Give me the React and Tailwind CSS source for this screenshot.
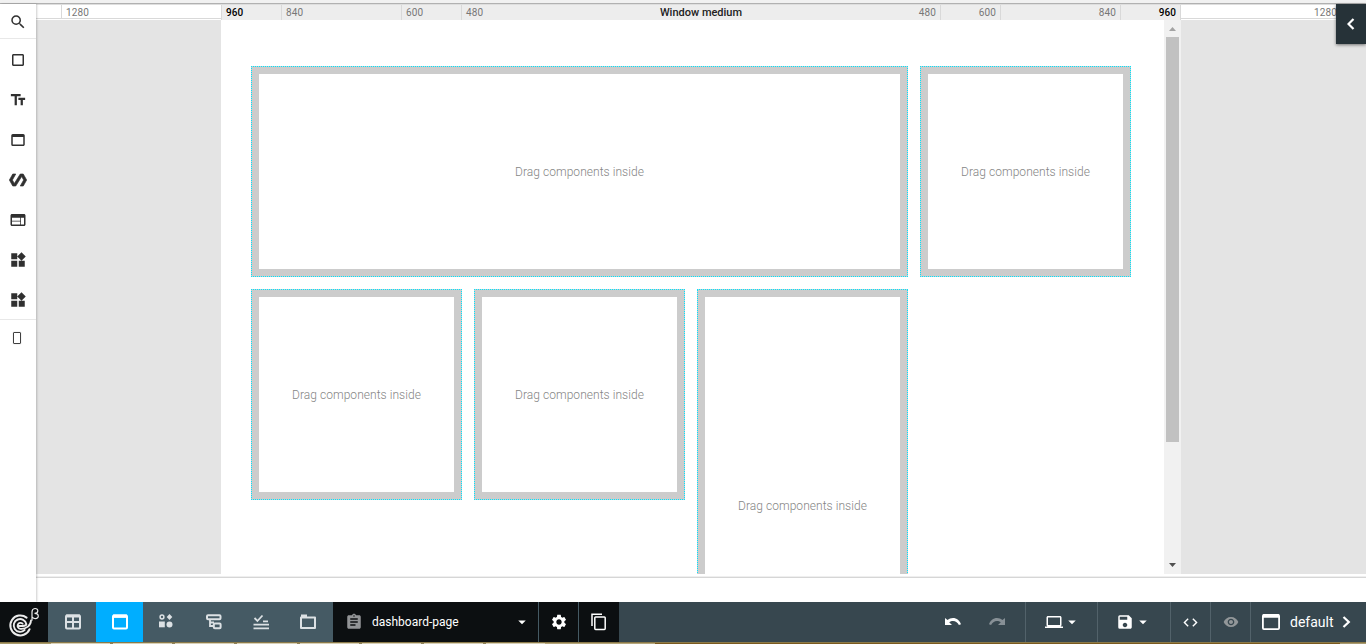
import { MdSearch, MdCropSquare, MdTextFields, MdWebAsset, MdWeb, MdWidgets, MdAssignment, MdSettings, MdLaptop, MdSave, MdCode, MdVisibility, MdArrowDropDown } from "react-icons/md";

function Polymer({ size }) {
  return (
    <svg width={size} height={size} viewBox="0 0 24 24" fill="currentColor" stroke="currentColor" strokeWidth="0.9">
      <path d="M19 4h-4L7.11 16.63 4.5 12 9 4H5L.5 12 5 20h4l7.89-12.63L19.5 12 15 20h4l4.5-8z" />
    </svg>
  );
}

const tools = [MdCropSquare, MdTextFields, MdWebAsset, Polymer, MdWeb, MdWidgets, MdWidgets];

function Panel({ className = "" }) {
  return (
    <div className={`relative border-8 border-[#ccc] ${className}`}>
      <div className="pointer-events-none absolute -inset-2 border border-dotted border-[#00e5ff]" />
      <div className="flex h-full items-center justify-center text-[12px] font-light leading-none tracking-[0.05px] text-[#858585]">Drag components inside</div>
    </div>
  );
}

function Tick({ value, className = "" }) {
  return <div className={`shrink-0 border-[#d9d9d9] leading-[16px] ${className}`}>{value}</div>;
}

function Ruler() {
  return (
    <div className="flex h-4 w-full shrink-0 overflow-hidden border-t border-[#dedede] text-[10px] tracking-[0.1px] text-[#777]">
      <div className="h-[14px] w-[25px] shrink-0 border-b border-[#d9d9d9] bg-white" />
      <Tick value="1280" className="h-[14px] w-40 border-b border-l bg-white pl-1" />
      <div className="flex w-[960px] shrink-0 bg-[#ededed]">
        <Tick value="960" className="w-[60px] border-l pl-1 font-medium text-black" />
        <Tick value="840" className="w-[120px] border-l pl-1" />
        <Tick value="600" className="w-[60px] border-l pl-1" />
        <Tick value="480" className="w-[60px] border-l pl-1" />
        <div className="flex-1 text-center text-[11px] font-medium leading-[16px] tracking-normal text-[#222]">Window medium</div>
        <Tick value="480" className="w-[60px] border-r pr-1 text-right" />
        <Tick value="600" className="w-[60px] border-r pr-1 text-right" />
        <Tick value="840" className="w-[120px] border-r pr-1 text-right" />
        <Tick value="960" className="w-[60px] border-r pr-1 text-right font-medium text-black" />
      </div>
      <Tick value="1280" className="h-[14px] w-40 border-b border-r bg-white pr-[3px] text-right" />
      <div className="h-[14px] flex-1 border-b border-[#d9d9d9] bg-white" />
    </div>
  );
}

function Logo() {
  return (
    <svg width="48" height="40" viewBox="0 0 48 40" fill="none" stroke="#ececec" strokeLinecap="round">
      <path d="M26.6 15.6A10 10 0 1 0 29.6 27.2" strokeWidth="2" />
      <path d="M24.6 28A6.4 6.4 0 1 1 26.4 22.2C26 24.2 23.5 24 18 24" strokeWidth="1.9" />
      <path d="M22.6 21.6A3 3 0 1 0 20.6 26.8C26.5 27.2 30.8 23.5 31 18.4" strokeWidth="1.8" />
      <path d="M32 18.2V10C32 5.5 37.8 5.6 37.8 8.8C37.8 10.8 36 11.4 34.5 11.4C39.6 11.4 39.2 16.6 35.4 16.6C34 16.6 33 16 32.3 15.2" strokeWidth="1.2" />
    </svg>
  );
}

function Glyph({ children }) {
  return <svg width="18" height="18" viewBox="0 0 18 18" fill="none" stroke="#dce1e4" strokeWidth="2">{children}</svg>;
}

function ModeButton({ children, className = "" }) {
  return <button className={`flex h-10 shrink-0 items-center justify-center ${className}`}>{children}</button>;
}

function Toolbar() {
  return (
    <footer className="flex h-10 shrink-0 bg-[#37474f] text-white">
      <div className="w-12 shrink-0 bg-[#0c0f11]"><Logo /></div>
      <div className="flex w-[285px] shrink-0 bg-[#455a64]">
        <ModeButton className="w-12 pl-[2px]">
          <Glyph><rect x="2" y="2.5" width="14" height="13" rx="1" /><path d="M2 9H16M9 3V16" /><path d="M2 3H16" strokeWidth="3" /></Glyph>
        </ModeButton>
        <ModeButton className="w-[47px] bg-[#00aeff]">
          <Glyph><rect x="2" y="2.5" width="14" height="13" rx="1" stroke="#fff" /><path d="M2 3.2H16" stroke="#fff" strokeWidth="3.4" /></Glyph>
        </ModeButton>
        <ModeButton className="w-[46px]">
          <Glyph><g transform="translate(0 -1)"><circle cx="5" cy="5" r="1.9" strokeWidth="1.5" /><path d="M12.5 2L15.3 5L12.5 8L9.7 5Z" fill="#dce1e4" stroke="none" /><rect x="2" y="9.5" width="5.8" height="5.8" fill="#dce1e4" stroke="none" /><circle cx="12.5" cy="12.4" r="3" fill="#dce1e4" stroke="none" /></g></Glyph>
        </ModeButton>
        <ModeButton className="w-[50px]">
          <Glyph><rect x="2" y="2.3" width="13.5" height="4" rx="1" /><path d="M5 6.5V13H8.5M5 9.5H9" strokeWidth="1.8" /><rect x="8.8" y="10.5" width="6.8" height="4.7" rx="1" /></Glyph>
        </ModeButton>
        <ModeButton className="w-[44px]">
          <Glyph><path d="M2.5 5L5.4 8L10.5 2.5M11 8.3H16M1.5 11.7H17M1.5 15.3H17" strokeWidth="1.8" /></Glyph>
        </ModeButton>
        <ModeButton className="w-[50px]">
          <Glyph><path d="M2 4.5H16V15H2Z" strokeLinejoin="round" /><path d="M2 3H8" strokeWidth="3" /></Glyph>
        </ModeButton>
      </div>
      <div className="flex w-[206px] shrink-0 items-center border-r border-[#455a64] bg-[#0c0f11] pl-[12px] pr-[7px]">
        <MdAssignment size={18} className="text-[#929496]" />
        <span className="ml-[9px] flex-1 text-[12px] leading-none">dashboard-page</span>
        <MdArrowDropDown size={18} />
      </div>
      <div className="flex w-10 shrink-0 items-center justify-center border-r border-[#455a64] bg-[#0c0f11]"><MdSettings size={18} /></div>
      <div className="flex w-10 shrink-0 items-center justify-center bg-[#0c0f11]">
        <svg width="18" height="18" viewBox="0 0 18 18" fill="none" stroke="#fff" strokeWidth="1.5"><path d="M2 13V1.2H12" /><rect x="4.8" y="4" width="10.4" height="12.4" rx="0.8" /></svg>
      </div>
      <div className="flex flex-1 items-center justify-end gap-[28px] pr-[20px]">
        <svg width="16" height="8" viewBox="0 0 16 8" fill="white"><path d="M8 0C5.9 0 4 .8 2.5 2L0 0V7H7L4.2 4.2C5.3 3.4 6.6 2.9 8 2.9C10.6 2.9 13 4.8 13.9 7L16 6.3C14.9 2.6 11.6 0 8 0Z" /></svg>
        <svg width="16" height="8" viewBox="0 0 16 8" fill="#879096"><path d="M8 0C10.1 0 12 .8 13.5 2L16 0V7H9L11.8 4.2C10.7 3.4 9.4 2.9 8 2.9C5.4 2.9 3 4.8 2.1 7L0 6.3C1.1 2.6 4.4 0 8 0Z" /></svg>
      </div>
      <div className="flex w-[72px] shrink-0 items-center border-l border-[#52626a] pl-[19px]"><MdLaptop size={18} /><MdArrowDropDown size={18} /></div>
      <div className="flex w-[73px] shrink-0 items-center border-l border-[#52626a] pl-[18px]"><MdSave size={18} /><MdArrowDropDown size={18} /></div>
      <div className="flex w-10 shrink-0 items-center justify-center border-l border-[#52626a]"><MdCode size={17} /></div>
      <div className="flex w-10 shrink-0 items-center justify-center border-l border-[#52626a] text-[#929799]"><MdVisibility size={16} /></div>
      <div className="flex w-[116px] shrink-0 items-center border-l border-[#52626a] pl-[11px]">
        <svg width="18" height="16" viewBox="0 0 18 16" fill="none" stroke="white" strokeWidth="1.8"><rect x=".9" y=".9" width="16.2" height="14.2" rx="1" /><path d="M1 2H17" strokeWidth="3.5" /></svg>
        <span className="ml-[10px] text-[14px] leading-none">default</span>
        <svg className="ml-[8px]" width="9" height="12" viewBox="0 0 9 12" fill="none" stroke="white" strokeWidth="2.2"><path d="M1.5 1L6.8 6L1.5 11" /></svg>
      </div>
    </footer>
  );
}

export default function App() {
  return (
    <div className="relative flex h-[644px] w-[1366px] flex-col overflow-hidden bg-white font-['Roboto',sans-serif]">
      <div className="h-1 shrink-0 border-b border-[#b1b1b1] bg-[#f1f1f1]" />
      <div className="flex h-[598px] shrink-0">
        <aside className="z-10 flex w-9 shrink-0 flex-col bg-white text-[#303030] shadow-[1px_0_2px_rgba(0,0,0,.2)]">
          <div className="flex h-[35px] shrink-0 items-center justify-center border-b border-[#e8e8e8] pt-[2px]"><MdSearch size={18} /></div>
          <div className="flex h-[281px] shrink-0 flex-col border-b border-[#e8e8e8] pt-px">
            {tools.map((Icon, i) => <div key={i} className="flex h-10 shrink-0 items-center justify-center"><Icon size={18} /></div>)}
          </div>
          <div className="flex h-9 items-center justify-center pr-[3px]"><div className="h-3 w-2 rounded-[1px] border border-[#404040] shadow-[0_0_1px_rgba(0,0,0,.4)]" /></div>
        </aside>
        <div className="flex w-[1330px] flex-col">
          <Ruler />
          <main className="flex h-[554px] shrink-0 bg-[#e4e4e4]">
            <div className="ml-[185px] h-[554px] w-[943px] overflow-hidden bg-white pl-[30px] pt-[46px]">
              <div className="grid w-[880px] grid-cols-[211px_211px_211px_211px] grid-rows-[211px_211px_211px] gap-3">
                <Panel className="col-span-3" />
                <Panel />
                <Panel />
                <Panel />
                <Panel className="row-span-2" />
              </div>
            </div>
            <div className="flex w-[17px] flex-col items-center bg-[#f1f1f1]">
              <svg width="17" height="17" viewBox="0 0 17 17" fill="#a3a3a3"><path d="M5 11L8.5 7L12 11Z" /></svg>
              <div className="h-[405px] w-[13px] bg-[#c1c1c1]" />
              <svg className="mt-auto" width="17" height="17" viewBox="0 0 17 17" fill="#505050"><path d="M5 6L8.5 10L12 6Z" /></svg>
            </div>
          </main>
          <div className="mt-[2px] h-[2px] shrink-0 border-b border-[#d6d6d6] bg-[#efefef]" />
        </div>
        <button className="absolute left-[1336px] top-1 z-20 flex h-10 w-[30px] items-center justify-center bg-[#263238] text-white shadow-[0_1px_3px_rgba(0,0,0,.5)]">
          <svg width="8" height="12" viewBox="0 0 8 12" fill="none" stroke="white" strokeWidth="2.2"><path d="M6.5 1L1.5 6L6.5 11" /></svg>
        </button>
      </div>
      <Toolbar />
      <div className="flex h-[2px] shrink-0 border-t border-[#8b7a4a] bg-[#7b5a1e]">
        <div className="w-[51px] bg-[#a89a6a]" />
        <div className="flex w-[494px] gap-[3px] bg-[#8f8157]">
          {[0, 1, 2, 3, 4, 5, 6, 7].map((i) => <div key={i} className="flex-1 bg-[#d8d0b5]" />)}
        </div>
        <div className="w-[110px] bg-[#b5a67a]" />
        <div className="flex-1" />
        <div className="w-[26px] bg-[#a89a70]" />
      </div>
    </div>
  );
}
